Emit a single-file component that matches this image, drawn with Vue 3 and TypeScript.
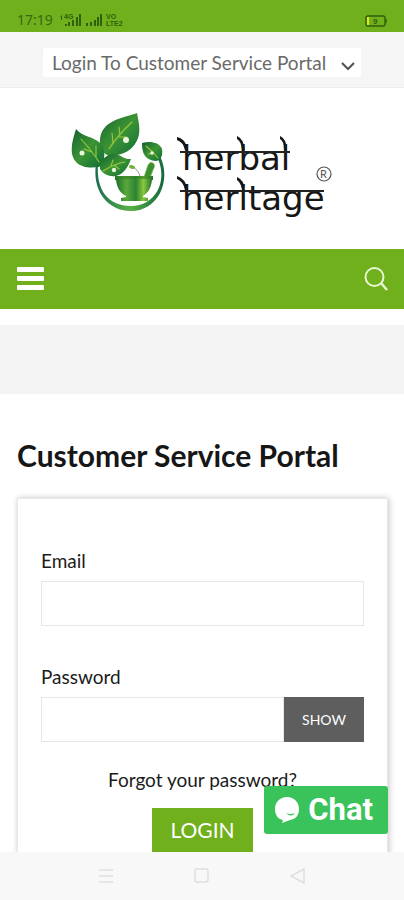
<script setup lang="ts">
import { computed, ref } from 'vue'

const portal = ref('customer')
const email = ref('')
const password = ref('')
const revealed = ref(false)
const passwordType = computed(() => (revealed.value ? 'text' : 'password'))
</script>

<template>
  <div class="screen">
    <header class="status">
      <div class="status-left">
        <span class="clock">17:19</span>
        <svg class="signals" width="64" height="14" viewBox="0 0 64 14" aria-hidden="true">
          <g fill="#315f0b">
            <path d="M1 4l2-2v5H2V4zM6 11h2v2H6zM9 9h2v4H9zM13 7h2v6h-2zM17 4h2v9h-2zM20 1h2v12h-2z" />
            <path d="M27 10h2v3h-2zM31 9h2v4h-2zM35 7h2v6h-2zM38 4h2v9h-2zM41 1h2v12h-2z" />
          </g>
          <text x="5" y="6" class="tiny">4G</text>
          <text x="47" y="6" class="tiny">VO</text>
          <text x="47" y="13" class="tiny">LTE2</text>
        </svg>
      </div>
      <svg width="24" height="14" viewBox="0 0 24 14" aria-hidden="true">
        <rect x="2" y="2" width="19" height="10" rx="2" fill="none" stroke="#315f0b" stroke-width="1.4" />
        <path d="M22 5v4" stroke="#315f0b" stroke-width="1.4" />
        <path d="M3 3h2v8H3z" fill="#e9e715" />
        <text x="9" y="10" class="tiny charge">9</text>
      </svg>
    </header>

    <main class="page">
      <div class="topbar">
        <div class="picker">
          <select v-model="portal" aria-label="Portal">
            <option value="customer">Login To Customer Service Portal</option>
          </select>
          <svg width="14" height="10" viewBox="0 0 14 10" aria-hidden="true">
            <path d="M1 2l6 6 6-6" fill="none" stroke="#555" stroke-width="2.2" />
          </svg>
        </div>
      </div>

      <a class="brand" href="#" aria-label="Herbal Heritage home">
        <svg width="262" height="112" viewBox="70 112 262 112">
          <defs>
            <linearGradient id="leaf" x1="0" y1="0" x2="1" y2="1">
              <stop offset="0" stop-color="#12622f" />
              <stop offset=".5" stop-color="#3c9435" />
              <stop offset="1" stop-color="#0d6b36" />
            </linearGradient>
            <linearGradient id="bowl">
              <stop offset="0" stop-color="#176c2c" />
              <stop offset=".3" stop-color="#59a83b" />
              <stop offset=".55" stop-color="#2c8432" />
              <stop offset=".75" stop-color="#8ac83e" />
              <stop offset="1" stop-color="#15682e" />
            </linearGradient>
            <linearGradient id="ring">
              <stop offset="0" stop-color="#1a6d52" />
              <stop offset=".5" stop-color="#58b144" />
              <stop offset="1" stop-color="#12683d" />
            </linearGradient>
          </defs>
          <path d="M95 164C91 190 106 211 130 211C157 211 171 181 159 156L157 159C167 182 154 206 130 206C107 206 95 190 97 164Z" fill="url(#ring)" />
          <g fill="url(#leaf)">
            <path d="M136 113C122 118 101 120 99 139C98 148 101 153 108 156C119 155 128 153 134 144C141 134 138 124 136 113Z" />
            <path d="M75 129C72 139 67 153 75 162C81 168 89 168 98 167C105 161 105 150 99 143C92 136 83 138 75 129Z" />
            <path d="M99 169C98 161 105 154 113 154C119 154 123 160 130 159C127 167 123 174 115 176C108 177 102 174 99 169Z" />
            <path d="M141 143C149 141 158 142 161 149C162 156 160 160 155 161C144 160 141 154 141 143Z" />
          </g>
          <g fill="none" stroke="#9bc93c" stroke-width="1.1" stroke-linecap="round">
            <path d="M108 149Q117 135 131 122M112 143l-1-10M119 135l-1-8M117 137l9 0" />
            <path d="M98 162Q91 151 80 139M91 152l-8-3M95 157l0-11" />
            <path d="M102 171Q113 164 124 162M110 166l2-6M113 165l5 4" />
            <path d="M157 158Q151 151 145 146M152 153l-5 1" />
          </g>
          <g fill="#e9f5d8">
            <circle cx="125" cy="140" r="3" />
            <circle cx="81" cy="153" r="2.5" />
            <circle cx="113" cy="170" r="2.2" />
            <circle cx="151" cy="153" r="1.8" />
          </g>
          <path d="M143 177L147 165Q149 161 152 163Q155 165 152 170L149 178Z" fill="#398f32" stroke="#83bd48" stroke-width=".7" />
          <path d="M139 176Q137 169 131 167" fill="none" stroke="#777" stroke-width=".8" />
          <ellipse cx="131" cy="167" rx="3" ry="1.800" fill="#73b23a" transform="rotate(15 131 167)" />
          <path d="M114 176H152V180H151C150 188 147 193 142 196V197L147 198V201H120V198L125 197V196C119 193 116 188 115 180H114Z" fill="url(#bowl)" />
          <path d="M114 176h38v3h-38z" fill="#347f24" opacity=".6" />
          <text x="181" y="170" class="wordmark">herbal</text>
          <text x="181" y="210" class="wordmark">heritage</text>
          <path d="M179 152H289M179 191H323" fill="none" stroke="#222" stroke-width="2" />
          <g fill="#161616">
            <path d="M176 137Q184 138 187 150H184Q182 142 176 140Z" />
            <path d="M236 136Q242 138 244 150H241Q240 141 236 139Z" />
            <path d="M279 136Q285 138 286 150H283Q283 141 279 139Z" />
            <path d="M176 176Q184 178 187 190H184Q182 181 176 179Z" />
            <path d="M236 177Q243 180 244 190H241Q240 183 236 180Z" />
          </g>
          <circle cx="323" cy="174" r="7" fill="none" stroke="#555" stroke-width="1.2" />
          <text x="319" y="178" class="mark">R</text>
        </svg>
      </a>

      <nav class="menu" aria-label="Main">
        <button type="button" aria-label="Menu">
          <svg width="28" height="24" viewBox="0 0 28 24">
            <g fill="#fff">
              <rect x="0" y="0" width="27" height="5" rx="1" />
              <rect x="0" y="9" width="27" height="5" rx="1" />
              <rect x="0" y="18" width="27" height="5" rx="1" />
            </g>
          </svg>
        </button>
        <button class="search" type="button" aria-label="Search">
          <svg width="24" height="24" viewBox="0 0 24 24" fill="none" stroke="#e7f8d4" stroke-width="2">
            <circle cx="10.500" cy="10" r="9" />
            <path d="M17 16l6 7" stroke-width="2.4" />
          </svg>
        </button>
      </nav>

      <div class="banner"></div>

      <section class="account">
        <h1>Customer Service Portal</h1>
        <form class="card" @submit.prevent>
          <div class="field">
            <label for="email">Email</label>
            <input id="email" v-model="email" type="email" />
          </div>
          <div class="field">
            <label for="password">Password</label>
            <div class="secret">
              <input id="password" v-model="password" :type="passwordType" />
              <button type="button" @click="revealed = !revealed">{{ revealed ? 'HIDE' : 'SHOW' }}</button>
            </div>
          </div>
          <div class="actions">
            <a href="#">Forgot your password?</a>
            <button type="submit">LOGIN</button>
          </div>
        </form>
      </section>
    </main>

    <button class="chat" type="button">
      <svg width="26" height="28" viewBox="0 0 26 28" aria-hidden="true">
        <path d="M13 1C6 1 1 6 1 13C1 19 4 23 9 24L8 27L16 24C22 23 25 19 25 13C25 6 20 1 13 1Z" fill="#fff" />
        <path d="M12 17Q16 19 21 17Q17 22 12 17Z" fill="#3bc35b" />
      </svg>
      <span>Chat</span>
    </button>

    <footer class="system">
      <button type="button" aria-label="Recent apps">
        <svg width="16" height="16" viewBox="0 0 16 16"><path d="M1 2h14M1 8h14M1 14h14" /></svg>
      </button>
      <button type="button" aria-label="Home">
        <svg width="16" height="16" viewBox="0 0 16 16"><rect x="1" y="1" width="13" height="13" rx="2" /></svg>
      </button>
      <button type="button" aria-label="Back">
        <svg width="16" height="16" viewBox="0 0 16 16"><path d="M14 1v14L1 8z" /></svg>
      </button>
    </footer>
  </div>
</template>

<style>
body {
  margin: 0;
  background: #fff;
}
</style>

<style scoped>
.screen {
  position: relative;
  display: flex;
  flex-direction: column;
  height: 100vh;
  font-family: Lato, sans-serif;
  color: #1c1c1c;
}

.screen *,
.screen {
  box-sizing: border-box;
}

button,
input,
select {
  margin: 0;
  padding: 0;
  border: 0;
  border-radius: 0;
  background: none;
  font-family: inherit;
  color: inherit;
}

svg {
  display: block;
}

.status {
  display: flex;
  flex: none;
  justify-content: space-between;
  align-items: flex-end;
  height: 32px;
  padding: 0 16px 4px 17px;
  background: #6fb01c;
}

.status-left {
  display: flex;
  align-items: center;
  gap: 6px;
}

.clock {
  font: 14px/16px "Noto Sans", sans-serif;
  color: #38690e;
}

.tiny {
  font: bold 7px "Liberation Sans", sans-serif;
  fill: #315f0b;
}

.charge {
  font-size: 8px;
}

.page {
  flex: 1;
  min-height: 0;
  overflow-y: auto;
  scrollbar-width: none;
}

.topbar {
  display: flex;
  justify-content: center;
  height: 56px;
  padding-top: 16px;
  border-bottom: 1px solid #ececec;
  background: #f5f5f5;
}

.picker {
  display: grid;
  align-items: center;
  height: 29px;
  border-radius: 3px;
  background: #fff;
}

.picker select,
.picker svg {
  grid-area: 1 / 1;
}

.picker select {
  height: 29px;
  padding: 0 33px 0 9px;
  appearance: none;
  font-size: 19px;
  color: #6a6a6a;
}

.picker svg {
  justify-self: end;
  margin: 6px 6px 0 0;
  pointer-events: none;
}

.brand {
  display: flex;
  justify-content: center;
  padding: 24px 0 25px;
}

.wordmark {
  font: 34px "DejaVu Sans", sans-serif;
  fill: #161616;
}

.mark {
  font: 11px Lato, sans-serif;
  fill: #555;
}

.menu {
  display: flex;
  justify-content: space-between;
  align-items: center;
  height: 60px;
  padding: 0 16px 0 17px;
  background: #6fb01c;
}

.banner {
  height: 69px;
  margin-top: 16px;
  background: #f4f4f4;
}

.account {
  padding: 42px 16px 32px 17px;
}

h1 {
  margin: 0 0 24px;
  font-size: 30px;
  line-height: 38px;
  font-weight: 700;
  color: #161616;
}

.card {
  display: flex;
  flex-direction: column;
  gap: 39px;
  padding: 50px 23px 40px;
  border: 1px solid #e8e8e8;
  box-shadow: 1px 0 6px rgba(0, 0, 0, 0.24);
}

.field {
  display: flex;
  flex-direction: column;
  gap: 8px;
}

label,
.actions a {
  font-size: 19px;
  line-height: 24px;
}

input {
  width: 100%;
  min-width: 0;
  height: 45px;
  padding: 0 12px;
  border: 1px solid #e6e6e6;
  font-size: 18px;
}

.secret {
  display: flex;
}

.secret input {
  flex: 1;
}

.secret button {
  flex: none;
  width: 80px;
  height: 45px;
  background: #5e5e5e;
  font-size: 14px;
  color: #fff;
}

.actions {
  display: flex;
  flex-direction: column;
  align-items: center;
  gap: 16px;
  margin-top: -13px;
}

.actions a {
  color: inherit;
  text-decoration: none;
}

.actions button {
  padding: 0 18px;
  background: #6fb01c;
  font-size: 21px;
  line-height: 44px;
  color: #fff;
}

.chat {
  position: absolute;
  right: 16px;
  bottom: 66px;
  display: flex;
  align-items: center;
  gap: 8px;
  height: 48px;
  padding: 0 15px 0 10px;
  border-radius: 3px;
  background: #3bc35b;
  font: bold 31px/50px Roboto, sans-serif;
  color: #fff;
}

.system {
  display: flex;
  flex: none;
  justify-content: center;
  align-items: center;
  gap: 80px;
  height: 48px;
  background: #f8f8f8;
}

.system svg {
  fill: none;
  stroke: #dedede;
  stroke-width: 1.5;
}
</style>
